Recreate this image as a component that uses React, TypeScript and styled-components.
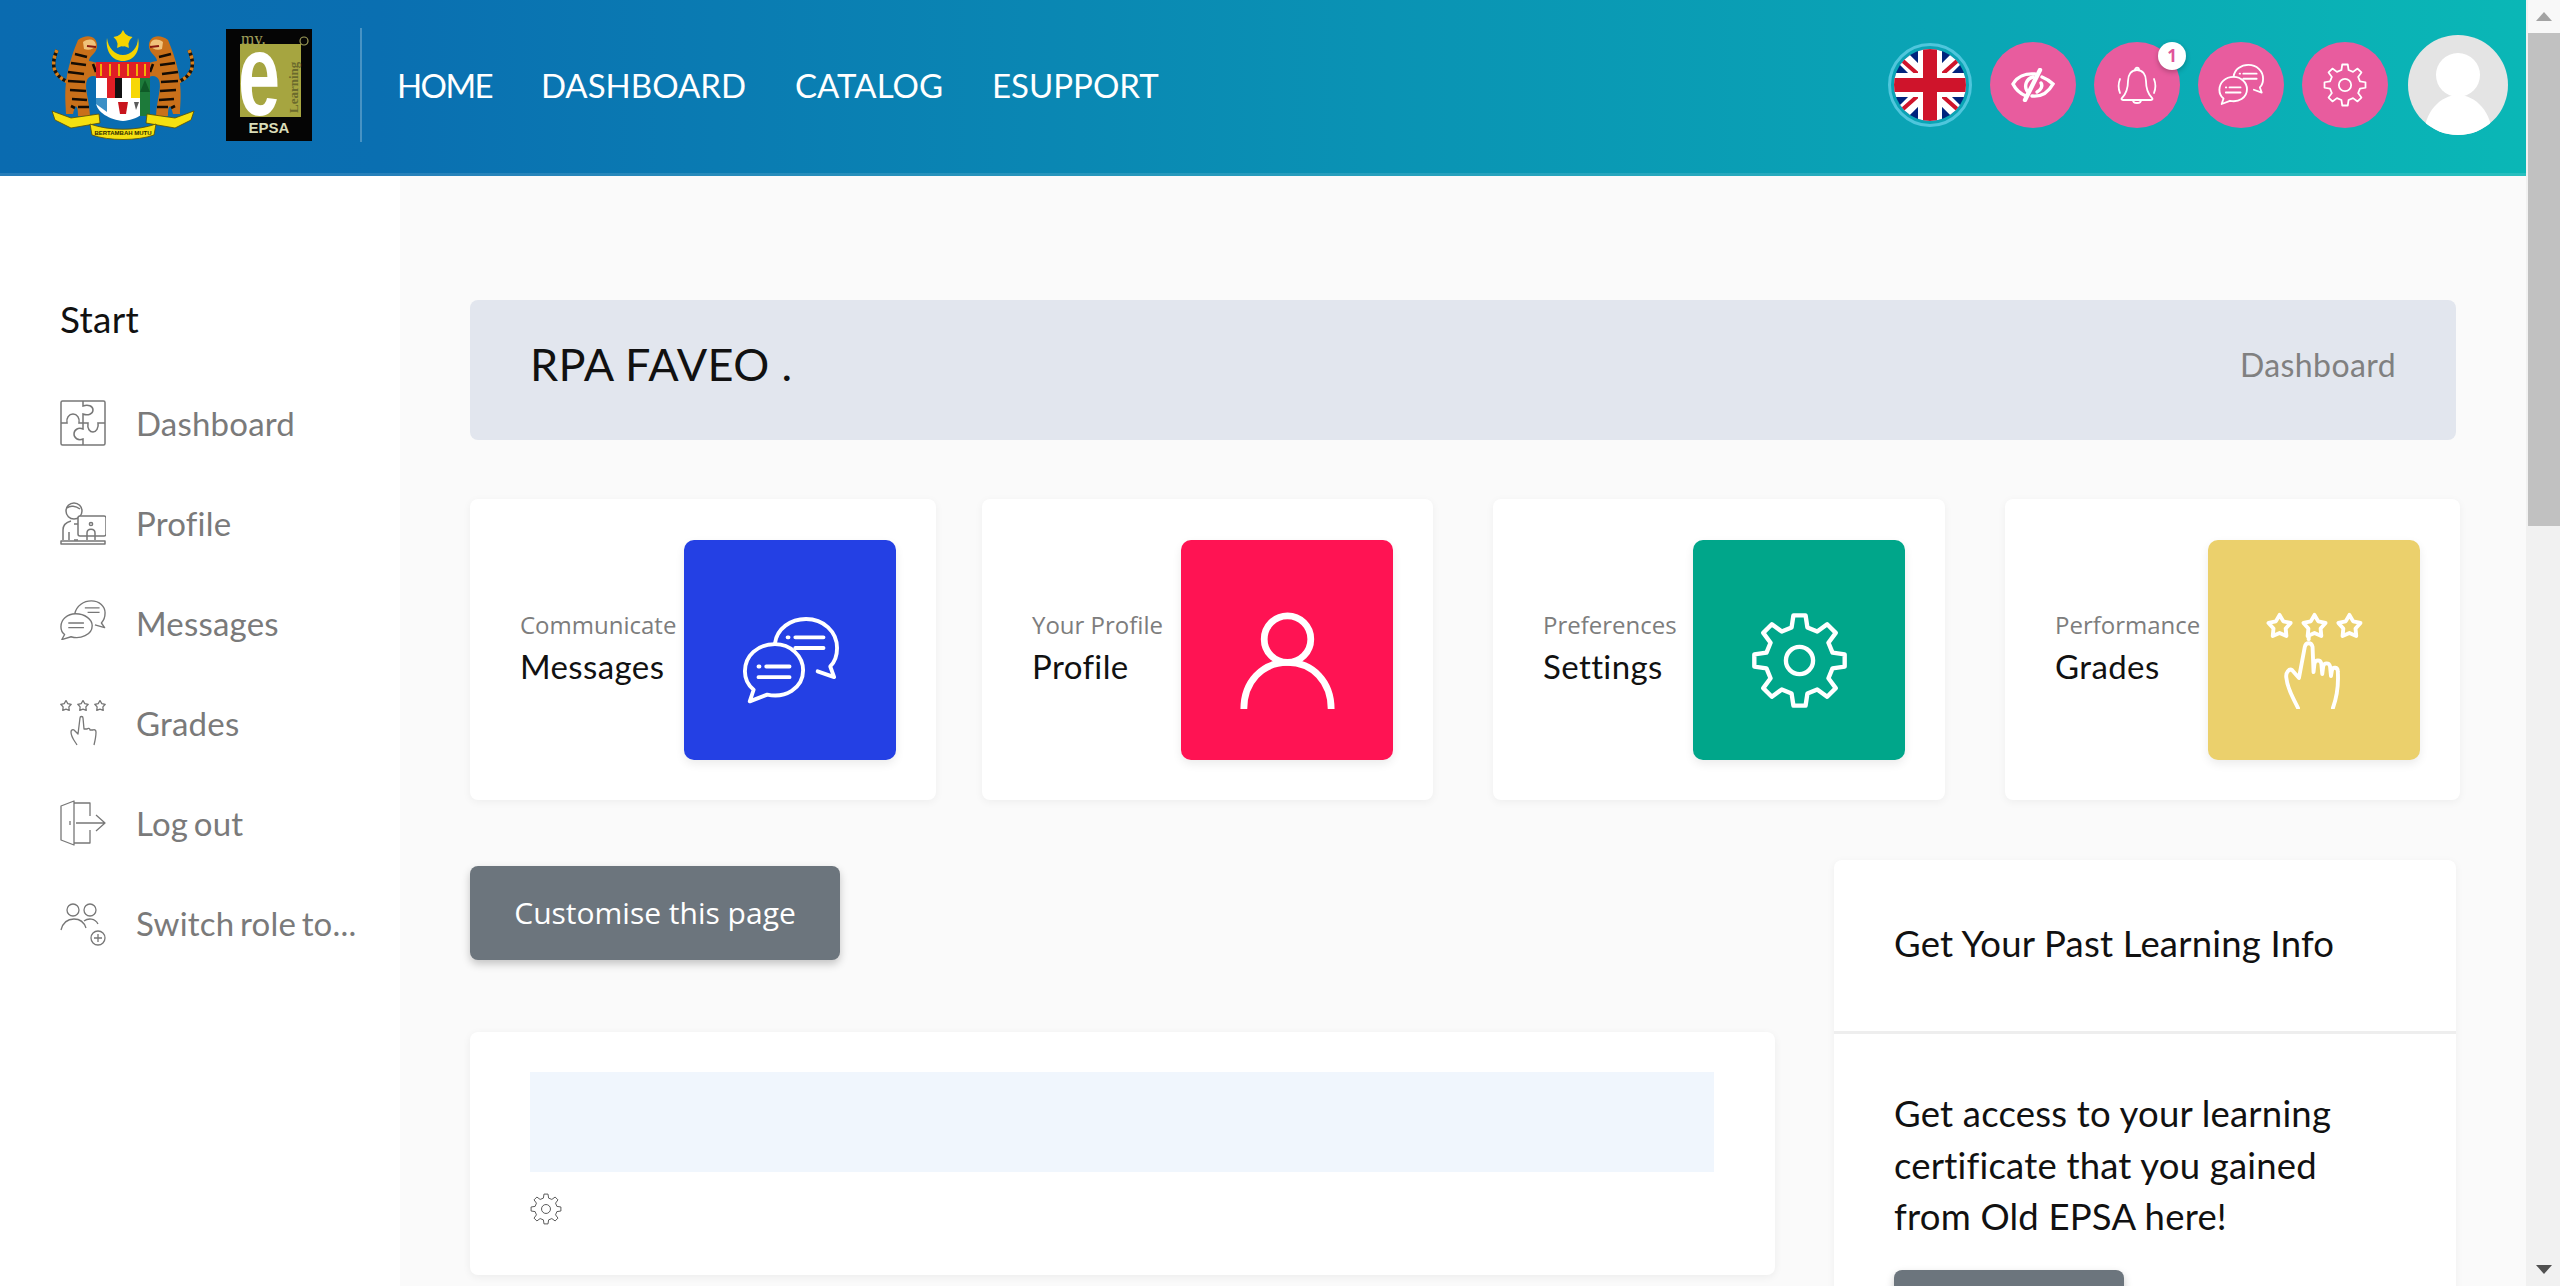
import React from 'react';
import styled, { createGlobalStyle } from 'styled-components';

const GlobalStyle = createGlobalStyle`
  html, body {
    margin: 0;
    padding: 0;
    height: 100%;
    overflow: hidden;
    background: #fafafa;
    font-family: 'Lato', sans-serif;
  }
  * { box-sizing: border-box; }
`;

const Shell = styled.div`
  display: flex;
  height: 1286px;
  overflow: hidden;
`;

const Page = styled.div`
  flex: 1;
  min-width: 0;
  display: flex;
  flex-direction: column;
`;

/* ---------- header ---------- */

const Header = styled.header`
  flex: none;
  height: 176px;
  padding: 0 18px 3px 51px;
  display: flex;
  align-items: center;
  background: linear-gradient(90deg, #0a6bb0 0%, #0a6fb1 15%, #0a93b4 55%, #0ab7b6 100%);
  border-bottom: 3px solid rgba(255, 255, 255, 0.12);
`;

const Logos = styled.div`
  display: flex;
  align-items: center;
  gap: 31px;
`;

const Divider = styled.div`
  width: 2px;
  height: 114px;
  margin: 0 35px 0 48px;
  background: rgba(255, 255, 255, 0.25);
`;

const Nav = styled.nav`
  display: flex;
  gap: 49px;
`;

const NavLink = styled.a<{ $spacing?: number }>`
  color: #fff;
  font-size: 33px;
  letter-spacing: ${(p) => p.$spacing ?? 0}px;
  text-decoration: none;
`;

const HeaderActions = styled.div`
  margin-left: auto;
  display: flex;
  align-items: center;
  gap: 18px;
`;

const FlagRing = styled.div`
  width: 84px;
  height: 84px;
  border-radius: 50%;
  border: 3px solid #4fc6dc;
  padding: 3px;
  display: flex;
`;

const RoundButton = styled.button`
  position: relative;
  width: 86px;
  height: 86px;
  padding: 0;
  border: 0;
  border-radius: 50%;
  background: #e85c9e;
  color: #fff;
  display: flex;
  align-items: center;
  justify-content: center;
`;

const CountBadge = styled.span`
  position: absolute;
  top: 0;
  right: -6px;
  width: 28px;
  height: 28px;
  border-radius: 50%;
  background: #fff;
  color: #e0559a;
  font-family: 'Open Sans', sans-serif;
  font-size: 17px;
  font-weight: 700;
  line-height: 28px;
  text-align: center;
  box-shadow: 0 2px 5px rgba(0, 0, 0, 0.25);
`;

const Avatar = styled.div`
  width: 100px;
  height: 100px;
  margin-left: 2px;
  border-radius: 50%;
  overflow: hidden;
  background: #e4e4e4;
  display: flex;
`;

/* ---------- sidebar ---------- */

const Body = styled.div`
  flex: 1;
  min-height: 0;
  display: flex;
`;

const Sidebar = styled.aside`
  flex: none;
  width: 400px;
  padding: 120px 0 0 60px;
  background: #fff;
`;

const SideHeading = styled.div`
  height: 46px;
  margin-bottom: 31px;
  color: #111;
  font-size: 37px;
  line-height: 46px;
  letter-spacing: 0.3px;
`;

const SideItem = styled.a`
  height: 100px;
  display: flex;
  align-items: center;
  gap: 30px;
  color: #7a7a7a;
  font-size: 33px;
  letter-spacing: 0.2px;
  word-spacing: -3px;
  white-space: nowrap;
`;

const SideIcon = styled.span`
  flex: none;
  width: 46px;
  height: 46px;
  display: flex;
  color: #777;
`;

/* ---------- main column ---------- */

const Main = styled.main`
  flex: 1;
  min-width: 0;
  padding: 124px 70px 0;
`;

const Banner = styled.div`
  height: 140px;
  padding: 0 60px 12px;
  border-radius: 8px;
  background: #e2e6ee;
  display: flex;
  align-items: center;
  justify-content: space-between;
`;

const BannerTitle = styled.h1`
  margin: 0;
  color: #111;
  font-size: 45px;
  font-weight: 400;
  letter-spacing: 0.4px;
`;

const Crumb = styled.span`
  color: #808080;
  font-size: 32px;
  letter-spacing: 0.4px;
`;

const StatRow = styled.div`
  display: flex;
  margin: 59px -4px 60px 0;
`;

const StatCard = styled.div<{ $width: number; $offset: number }>`
  flex: none;
  width: ${(p) => p.$width}px;
  height: 301px;
  margin-left: ${(p) => p.$offset}px;
  padding: 0 40px 0 50px;
  border-radius: 8px;
  background: #fff;
  box-shadow: 0 2px 8px rgba(0, 0, 0, 0.05);
  display: flex;
  align-items: center;
  justify-content: space-between;
`;

const StatText = styled.div`
  display: flex;
  flex-direction: column;
  gap: 4px;
  padding-bottom: 5px;
  white-space: nowrap;
`;

const StatLabel = styled.span`
  color: #7d7d7d;
  font-family: 'Open Sans', sans-serif;
  font-size: 24px;
  line-height: 33px;
`;

const StatName = styled.span`
  color: #111;
  font-size: 33px;
  line-height: 42px;
  letter-spacing: 0.4px;
`;

const StatTile = styled.div<{ $bg: string }>`
  flex: none;
  width: 212px;
  height: 220px;
  padding-top: 22px;
  border-radius: 10px;
  background: ${(p) => p.$bg};
  box-shadow: 0 4px 10px rgba(0, 0, 0, 0.08);
  color: #fff;
  display: flex;
  align-items: center;
  justify-content: center;
`;

const Columns = styled.div`
  display: grid;
  grid-template-columns: 1305px 622px;
  column-gap: 59px;
  align-items: start;
`;

const LeftColumn = styled.div`
  padding-top: 6px;
`;

const GreyButton = styled.button<{ $width: number }>`
  width: ${(p) => p.$width}px;
  height: 94px;
  padding: 0 0 2px;
  border: 0;
  border-radius: 8px;
  background: #6c757d;
  color: #fff;
  font-family: 'Open Sans', sans-serif;
  font-size: 30px;
  box-shadow: 0 4px 8px rgba(0, 0, 0, 0.22);
`;

const BlockCard = styled.section`
  height: 243px;
  margin-top: 72px;
  padding: 40px 61px 0 60px;
  border-radius: 8px;
  background: #fff;
  box-shadow: 0 2px 8px rgba(0, 0, 0, 0.06);
`;

const BlockNotice = styled.div`
  height: 100px;
  background: #f0f6fd;
`;

const BlockGear = styled.div`
  width: 32px;
  height: 32px;
  margin-top: 21px;
  color: #555;
  display: flex;
`;

const InfoCard = styled.section`
  border-radius: 8px;
  background: #fff;
  box-shadow: 0 2px 8px rgba(0, 0, 0, 0.05);
`;

const InfoHead = styled.div`
  height: 174px;
  padding: 0 60px 5px;
  border-bottom: 3px solid #eeeeee;
  display: flex;
  align-items: center;
  color: #111;
  font-size: 36.5px;
  letter-spacing: 0.2px;
`;

const InfoBody = styled.div`
  padding: 54px 60px 0;
`;

const InfoText = styled.p`
  margin: 0 0 27px;
  color: #111;
  font-size: 36.5px;
  line-height: 51.5px;
  letter-spacing: 0.2px;
`;

/* ---------- scrollbar ---------- */

const ScrollRail = styled.div`
  flex: none;
  width: 34px;
  height: 100%;
  padding-left: 2px;
  background: #f1f1f1;
  display: flex;
  flex-direction: column;
`;

const ScrollArrow = styled.div<{ $down?: boolean }>`
  flex: none;
  height: 33px;
  background: ${(p) => (p.$down ? '#f1f1f1' : '#f8f8f8')};
  display: flex;
  align-items: center;
  justify-content: center;
  &::before {
    content: '';
    border-left: 8px solid transparent;
    border-right: 8px solid transparent;
    ${(p) => (p.$down ? 'border-top: 9px solid #505050;' : 'border-bottom: 9px solid #a3a3a3;')}
  }
`;

const ScrollThumb = styled.div`
  flex: none;
  height: 493px;
  background: #c1c1c1;
`;

const ScrollGap = styled.div`
  flex: 1;
`;

/* ---------- drawings ---------- */

const gearPath = (c: number, outer: number, inner: number, teeth: number) => {
  const step = (Math.PI * 2) / teeth;
  const pts: string[] = [];
  for (let i = 0; i < teeth; i++) {
    const a = -Math.PI / 2 + i * step;
    const at = (r: number, d: number) =>
      `${(c + r * Math.cos(a + d * step)).toFixed(2)} ${(c + r * Math.sin(a + d * step)).toFixed(2)}`;
    pts.push(at(inner, -0.3), at(outer, -0.17), at(outer, 0.17), at(inner, 0.3));
  }
  return `M${pts.join('L')}Z`;
};

type IconProps = { size: number; sw: number };

const GearIcon = ({ size, sw }: IconProps) => (
  <svg width={size} height={size} viewBox="0 0 100 100" fill="none" stroke="currentColor" strokeWidth={sw} strokeLinejoin="round">
    <path d={gearPath(50, 47, 35, 8)} />
    <circle cx="50" cy="50" r="14" />
  </svg>
);

const ChatIcon = ({ size, sw }: IconProps) => (
  <svg width={size} height={size * 0.9} viewBox="0 0 100 90" fill="none" stroke="currentColor" strokeWidth={sw} strokeLinecap="round" strokeLinejoin="round">
    <path d="M34 27C36 12 50 2 66 2C84 2 98 15 98 32C98 41 95 47 91 51L95 62L78 56" />
    <path d="M34 28C16 28 3 40 3 56C3 65 7 71 12 75L8 87L26 80C44 84 63 74 63 55C63 40 50 28 34 28Z" />
    <path d="M47 21H48M55 21H84M55 32H84M17 51H18M25 51H49M17 62H49" />
  </svg>
);

const PersonIcon = ({ size, sw }: IconProps) => (
  <svg width={size} height={size} viewBox="0 0 100 100" fill="none" stroke="currentColor" strokeWidth={sw}>
    <ellipse cx="50" cy="28" rx="24" ry="24" />
    <path d="M5 100C5 72 24 52 50 52C76 52 95 72 95 100" />
  </svg>
);

const starPath = (cx: number, cy: number, r: number) => {
  const pts: string[] = [];
  for (let i = 0; i < 10; i++) {
    const a = -Math.PI / 2 + (i * Math.PI) / 5;
    const d = i % 2 ? r * 0.55 : r;
    pts.push(`${(cx + d * Math.cos(a)).toFixed(2)} ${(cy + d * Math.sin(a)).toFixed(2)}`);
  }
  return `M${pts.join('L')}Z`;
};

const GradesIcon = ({ size, sw }: IconProps) => (
  <svg width={size} height={size} viewBox="0 0 100 100" fill="none" stroke="currentColor" strokeWidth={sw} strokeLinecap="round" strokeLinejoin="round">
    <path d={starPath(14, 15, 12)} />
    <path d={starPath(50, 15, 12)} />
    <path d={starPath(86, 15, 12)} />
    <path d="M33 99C28 88 22 80 21 68C20 62 24 58 27 60L34 68L40 36C41 31 47 31 48 36L49 62L50 53C51 49 56 49 57 53L58 64L59 56C60 52 65 52 66 56L67 66L68 60C69 56 74 57 74 61C75 76 73 88 69 99" />
    <path d="M44 28V26" />
  </svg>
);

const EyeOffIcon = () => (
  <svg width="44" height="34" viewBox="0 0 44 34" fill="none" stroke="#fff" strokeWidth="3.4" strokeLinecap="round">
    <path d="M24 6C14 5 6 9 2 16C5 22 10 26 15 28" />
    <path d="M22 9C15 11 13 18 16 23" />
    <path d="M29 2L14 32" strokeWidth="4.4" />
    <path d="M31 9C36 11 39 13 42 16C37 25 30 29 21 28" />
    <path d="M30 15C32 18 30 22 26 24" />
  </svg>
);

const BellIcon = () => (
  <svg width="40" height="40" viewBox="0 0 40 38" fill="none" stroke="#fff" strokeWidth="1.8" strokeLinecap="round" strokeLinejoin="round">
    <path d="M20 4C14 4 11 9 11 15C11 23 9 28 5 32C4 33 4.5 34 6 34H34C35.5 34 36 33 35 32C31 28 29 23 29 15C29 9 26 4 20 4Z" />
    <path d="M18 4C18 1 22 1 22 4M16 34C16 38 24 38 24 34" />
    <path d="M3 13C1 18 1 22 3 27M37 13C39 18 39 22 37 27" />
  </svg>
);

const UnionJack = () => (
  <svg width="100%" height="100%" viewBox="0 0 72 72">
    <defs>
      <clipPath id="flagClip"><circle cx="36" cy="36" r="36" /></clipPath>
    </defs>
    <g clipPath="url(#flagClip)">
      <rect width="72" height="72" fill="#00247d" />
      <path d="M0 0L72 72M72 0L0 72" stroke="#fff" strokeWidth="14" />
      <path d="M0 4L36 36M36 36L72 68M72 4L36 36M36 36L0 68" stroke="#cf142b" strokeWidth="4" />
      <path d="M36 0V72M0 36H72" stroke="#fff" strokeWidth="24" />
      <path d="M36 0V72M0 36H72" stroke="#cf142b" strokeWidth="14" />
    </g>
  </svg>
);

const AvatarFigure = () => (
  <svg width="100" height="100" viewBox="0 0 100 100" fill="#fff">
    <ellipse cx="50" cy="40" rx="22" ry="22" />
    <path d="M16 100C16 78 32 60 50 60C68 60 84 78 84 100Z" />
  </svg>
);

const Tiger = () => (
  <g>
    <path d="M17 52C3 46 -1 36 6 20" fill="none" stroke="#1c1208" strokeWidth="3.5" />
    <path d="M17 52C3 46 -1 36 6 20" fill="none" stroke="#d9801c" strokeWidth="3.5" strokeDasharray="3 3" />
    <path d="M27 10C36 3 47 6 46 17C45 24 38 26 38 31C46 32 53 36 55 42L46 47C42 45 38 46 36 50C33 58 38 68 39 86L27 86C27 76 25 72 22 84L15 84C15 70 10 50 27 10Z" fill="#c9701a" />
    <path d="M24 24L36 27M20 33L35 35M17 42L33 44M17 51L34 52M19 60L35 61M21 69L36 70M27 77L38 77M42 34L45 42M48 36L50 44M20 76L24 78" stroke="#140c04" strokeWidth="2.6" />
    <path d="M32 12C38 8 44 9 45 15C43 19 38 21 33 19Z" fill="#f1c27a" />
    <path d="M36 16L45 17" stroke="#8a1a10" strokeWidth="2" />
  </g>
);

const CoatOfArms = () => (
  <svg width="144" height="110" viewBox="0 0 144 110" aria-label="Jata Negara">
    <Tiger />
    <g transform="matrix(-1 0 0 1 144 0)">
      <Tiger />
    </g>
    <path d="M56 8C54 22 62 31 72 31C82 31 90 22 87 8C87 18 80 25 72 25C64 25 57 18 56 8Z" fill="#f5d400" />
    <path d={starPath(72, 10, 10)} fill="#f5d400" />
    <circle cx="72" cy="10" r="6.5" fill="#f5d400" />
    <path d="M45 32H99V72C99 82 85 90 72 91C59 90 45 82 45 72Z" fill="#fff" />
    <rect x="45" y="32" width="54" height="16" fill="#e01e25" />
    <path d="M50 34V46M59 34V46M68 34V46M77 34V46M86 34V46M94 34V46" stroke="#f5d400" strokeWidth="1.6" />
    <rect x="56" y="48" width="8" height="20" fill="#e01e25" />
    <rect x="64" y="48" width="7" height="20" fill="#111" />
    <rect x="80" y="48" width="9" height="20" fill="#f7d707" />
    <rect x="89" y="48" width="10" height="38" fill="#1d7a3a" />
    <path d="M45 68H56V82L45 74Z" fill="#3a8fc6" />
    <path d="M94 50L89 62H99Z" fill="#0f5a28" />
    <path d="M67 72L77 72L75 84H69Z" fill="#c8141c" />
    <path d="M83 72L88 72L85 80Z" fill="#5a5a5a" />
    <path d="M1 81L20 88L48 84L49 93L20 98L4 90Z" fill="#f5e010" stroke="#5b4c00" strokeWidth="0.8" />
    <path d="M143 81L124 88L96 84L95 93L124 98L140 90Z" fill="#f5e010" stroke="#5b4c00" strokeWidth="0.8" />
    <path d="M39 94C58 101 86 101 105 94L103 105C86 111 58 111 41 105Z" fill="#f5e010" stroke="#5b4c00" strokeWidth="0.8" />
    <text x="72" y="105" textAnchor="middle" fontFamily="Liberation Sans, sans-serif" fontSize="6" fontWeight="700" fill="#2d2a00">BERTAMBAH MUTU</text>
  </svg>
);

const ElearningLogo = () => (
  <svg width="86" height="112" viewBox="0 0 86 112" aria-label="my eLearning EPSA">
    <rect width="86" height="112" fill="#050505" />
    <rect x="14" y="15" width="61" height="73" fill="#a6a540" />
    <text x="15" y="15" fontFamily="Liberation Serif, serif" fontSize="17" fill="#a09f5a">my.</text>
    <text transform="translate(12 86) scale(1.26 1.95)" fontFamily="Liberation Sans, sans-serif" fontSize="60" fontWeight="700" fill="#fff">e</text>
    <text x="0" y="0" transform="translate(72 84) rotate(-90)" fontFamily="Liberation Serif, serif" fontSize="13" fontWeight="700" fill="#6b6a2c">Learning</text>
    <circle cx="78" cy="12" r="4" fill="none" stroke="#a09f5a" strokeWidth="1.2" />
    <text x="43" y="104" textAnchor="middle" fontFamily="Liberation Sans, sans-serif" fontSize="15" fontWeight="700" fill="#d9dcb8">EPSA</text>
  </svg>
);

const PuzzleIcon = () => (
  <svg width="46" height="46" viewBox="0 0 46 46" fill="none" stroke="currentColor" strokeWidth="1.5">
    <rect x="1" y="1" width="44" height="44" rx="1.5" />
    <path d="M23 1V6C28 4 33 6 33 10C33 14 28 16 23 14V23" />
    <path d="M1 23H7C6 18 9 14 13 14C17 14 20 18 19 23H28C27 29 30 32 33 32C36 32 39 28 38 23H45" />
    <path d="M23 23V29C18 27 14 30 14 34C14 38 18 41 23 39V45" />
  </svg>
);

const DeskIcon = () => (
  <svg width="46" height="46" viewBox="0 0 46 46" fill="none" stroke="currentColor" strokeWidth="1.5" strokeLinejoin="round">
    <circle cx="14" cy="11" r="8" />
    <path d="M7 8C10 5 16 6 20 9M3 40V30C3 25 7 22 11 21M18 24H14M9 32V40M14 40H18" />
    <rect x="18" y="16" width="28" height="20" rx="2" fill="#fff" />
    <path d="M27 40V33C27 28 35 28 35 33V40" />
    <circle cx="31" cy="24" r="1.6" />
    <path d="M1 41H45V44H1Z" />
  </svg>
);

const SmallChatIcon = () => (
  <svg width="46" height="40" viewBox="0 0 100 87" fill="none" stroke="currentColor" strokeWidth="3" strokeLinejoin="round">
    <path d="M32 30C36 12 52 2 68 2C86 2 98 14 98 28C98 40 94 46 90 50L97 60L76 54" />
    <path d="M34 30C16 30 2 42 2 58C2 66 6 72 10 75L4 86L24 80C44 86 70 76 70 56C70 42 54 30 34 30Z" />
    <path d="M54 17H86M60 27H86M18 50H52M18 60H52" />
  </svg>
);

const GradesSmall = () => (
  <svg width="46" height="46" viewBox="0 0 46 46" fill="none" stroke="currentColor" strokeWidth="1.3" strokeLinejoin="round">
    <path d={starPath(6, 6, 5.5)} />
    <path d={starPath(23, 6, 5.5)} />
    <path d={starPath(40, 6, 5.5)} />
    <path d="M17 45C14 40 11 37 11 32C11 30 13 29 14 30L18 34L20 18C20 16 23 16 23 18L24 29L27 29C28 28 30 28 30 30L33 30C34 29 36 30 36 32C36 37 35 41 34 45" />
  </svg>
);

const DoorIcon = () => (
  <svg width="46" height="46" viewBox="0 0 46 46" fill="none" stroke="currentColor" strokeWidth="1.3" strokeLinejoin="round">
    <path d="M1 6L14 1V45L1 40Z" />
    <path d="M14 3H30V16M30 30V43H14" />
    <path d="M10 21V25" />
    <path d="M16 23H45M36 15L45 23L36 31" />
  </svg>
);

const RoleIcon = () => (
  <svg width="46" height="46" viewBox="0 0 46 46" fill="none" stroke="currentColor" strokeWidth="1.3">
    <circle cx="13" cy="10" r="6" />
    <circle cx="30" cy="10" r="6" />
    <path d="M1 30C3 22 8 19 14 19C20 19 24 22 26 28M24 21C28 18 35 18 38 24" />
    <circle cx="38" cy="38" r="7" />
    <path d="M38 34V42M34 38H42" />
  </svg>
);

const sideItems = [
  { label: 'Dashboard', icon: <PuzzleIcon /> },
  { label: 'Profile', icon: <DeskIcon /> },
  { label: 'Messages', icon: <SmallChatIcon /> },
  { label: 'Grades', icon: <GradesSmall /> },
  { label: 'Log out', icon: <DoorIcon /> },
  { label: 'Switch role to...', icon: <RoleIcon /> },
];

const stats = [
  { label: 'Communicate', name: 'Messages', bg: '#2440e4', width: 466, offset: 0, icon: <ChatIcon size={97} sw={4} /> },
  { label: 'Your Profile', name: 'Profile', bg: '#ff1353', width: 451, offset: 46, icon: <PersonIcon size={97} sw={7} /> },
  { label: 'Preferences', name: 'Settings', bg: '#00a68a', width: 452, offset: 60, icon: <GearIcon size={97} sw={4.5} /> },
  { label: 'Performance', name: 'Grades', bg: '#ebd06c', width: 455, offset: 60, icon: <GradesIcon size={97} sw={4} /> },
];

export default function App() {
  return (
    <Shell>
      <GlobalStyle />
      <Page>
        <Header>
          <Logos>
            <CoatOfArms />
            <ElearningLogo />
          </Logos>
          <Divider />
          <Nav>
            <NavLink $spacing={-1.6}>HOME</NavLink>
            <NavLink>DASHBOARD</NavLink>
            <NavLink>CATALOG</NavLink>
            <NavLink>ESUPPORT</NavLink>
          </Nav>
          <HeaderActions>
            <FlagRing>
              <UnionJack />
            </FlagRing>
            <RoundButton>
              <EyeOffIcon />
            </RoundButton>
            <RoundButton>
              <BellIcon />
              <CountBadge>1</CountBadge>
            </RoundButton>
            <RoundButton>
              <ChatIcon size={46} sw={4} />
            </RoundButton>
            <RoundButton>
              <GearIcon size={44} sw={4} />
            </RoundButton>
            <Avatar>
              <AvatarFigure />
            </Avatar>
          </HeaderActions>
        </Header>
        <Body>
          <Sidebar>
            <SideHeading>Start</SideHeading>
            {sideItems.map((item) => (
              <SideItem key={item.label}>
                <SideIcon>{item.icon}</SideIcon>
                {item.label}
              </SideItem>
            ))}
          </Sidebar>
          <Main>
            <Banner>
              <BannerTitle>RPA FAVEO .</BannerTitle>
              <Crumb>Dashboard</Crumb>
            </Banner>
            <StatRow>
              {stats.map((s) => (
                <StatCard key={s.name} $width={s.width} $offset={s.offset}>
                  <StatText>
                    <StatLabel>{s.label}</StatLabel>
                    <StatName>{s.name}</StatName>
                  </StatText>
                  <StatTile $bg={s.bg}>{s.icon}</StatTile>
                </StatCard>
              ))}
            </StatRow>
            <Columns>
              <LeftColumn>
                <GreyButton $width={370}>Customise this page</GreyButton>
                <BlockCard>
                  <BlockNotice />
                  <BlockGear>
                    <GearIcon size={32} sw={3} />
                  </BlockGear>
                </BlockCard>
              </LeftColumn>
              <InfoCard>
                <InfoHead>Get Your Past Learning Info</InfoHead>
                <InfoBody>
                  <InfoText>
                    Get access to your learning
                    <br />
                    certificate that you gained
                    <br />
                    from Old EPSA here!
                  </InfoText>
                  <GreyButton $width={230} />
                </InfoBody>
              </InfoCard>
            </Columns>
          </Main>
        </Body>
      </Page>
      <ScrollRail>
        <ScrollArrow />
        <ScrollThumb />
        <ScrollGap />
        <ScrollArrow $down />
      </ScrollRail>
    </Shell>
  );
}
